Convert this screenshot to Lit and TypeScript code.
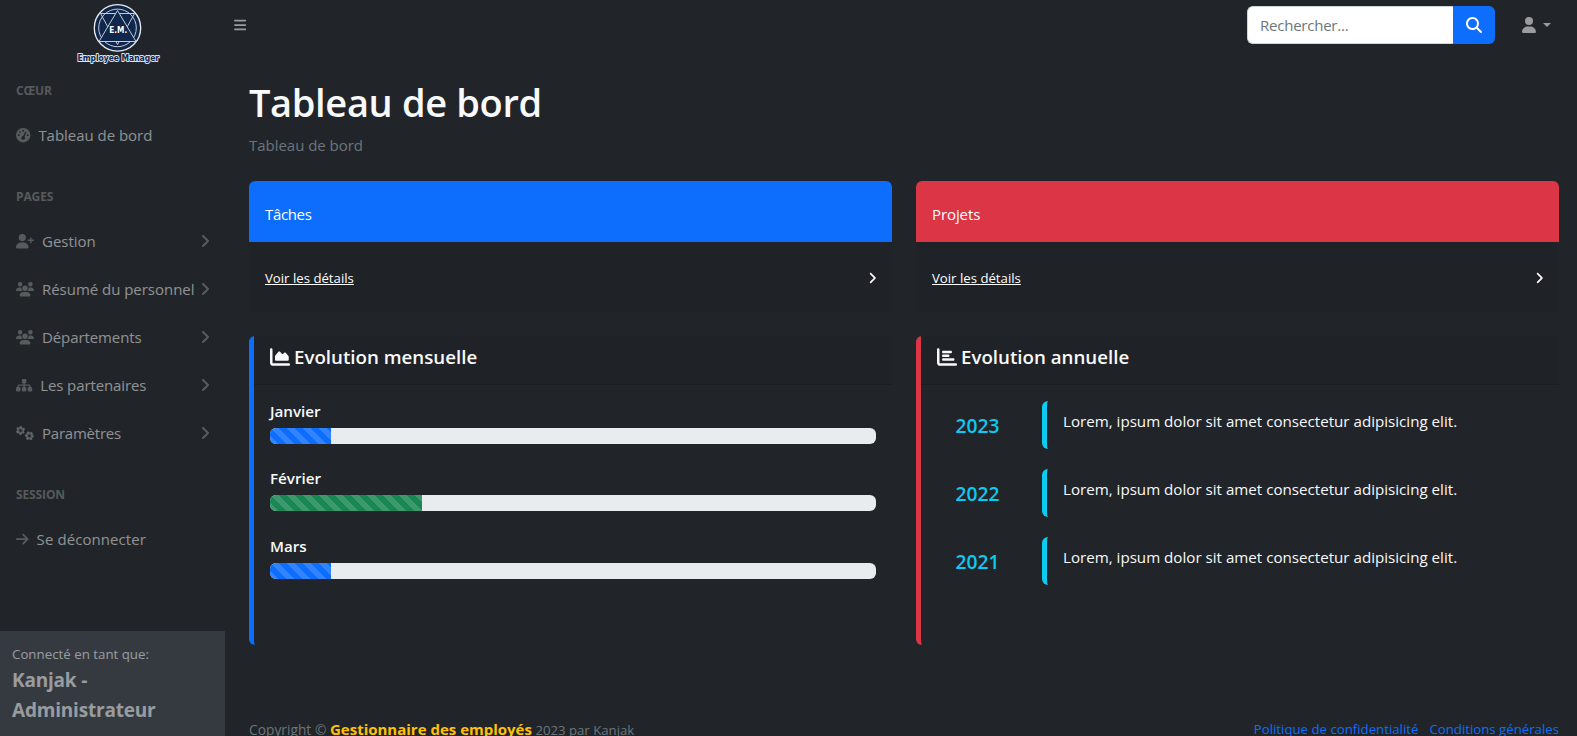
import { LitElement, html, svg, css } from "lit";
import { customElement, property } from "lit/decorators.js";
import { classMap } from "lit/directives/class-map.js";

const AXIS =
  "M64 64c0-17.7-14.3-32-32-32S0 46.3 0 64V400c0 44.2 35.8 80 80 80H480c17.7 0 32-14.3 32-32s-14.3-32-32-32H80c-8.8 0-16-7.2-16-16V64z";

const ICONS: Record<string, [number, string]> = {
  gauge: [512, "M0 256a256 256 0 1 1 512 0A256 256 0 1 1 0 256zM288 96a32 32 0 1 0 -64 0 32 32 0 1 0 64 0zM256 416c35.3 0 64-28.7 64-64c0-17.4-6.9-33.1-18.1-44.6L366 161.7c5.3-12.1-.2-26.3-12.3-31.6s-26.3 .2-31.6 12.3L257.9 288c-.6 0-1.3 0-1.9 0c-35.3 0-64 28.7-64 64s28.7 64 64 64zM176 144a32 32 0 1 0 -64 0 32 32 0 1 0 64 0zM96 288a32 32 0 1 0 0-64 32 32 0 1 0 0 64zm352-32a32 32 0 1 0 -64 0 32 32 0 1 0 64 0z"],
  userPlus: [640, "M96 128a128 128 0 1 1 256 0A128 128 0 1 1 96 128zM0 482.3C0 383.8 79.8 304 178.3 304h91.4C368.2 304 448 383.8 448 482.3c0 16.4-13.3 29.7-29.7 29.7H29.7C13.3 512 0 498.7 0 482.3zM504 312V248H440c-13.3 0-24-10.7-24-24s10.7-24 24-24h64V136c0-13.3 10.7-24 24-24s24 10.7 24 24v64h64c13.3 0 24 10.7 24 24s-10.7 24-24 24H552v64c0 13.3-10.7 24-24 24s-24-10.7-24-24z"],
  users: [640, "M144 0a80 80 0 1 1 0 160A80 80 0 1 1 144 0zM512 0a80 80 0 1 1 0 160A80 80 0 1 1 512 0zM0 298.7C0 239.8 47.8 192 106.7 192h42.7c15.9 0 31 3.5 44.6 9.7c-1.3 7.2-1.9 14.7-1.9 22.3c0 38.2 16.8 72.5 43.3 96c-.2 0-.4 0-.7 0H21.3C9.6 320 0 310.4 0 298.7zM405.3 320c-.2 0-.4 0-.7 0c26.6-23.5 43.3-57.8 43.3-96c0-7.6-.7-15-1.9-22.3c13.6-6.3 28.7-9.7 44.6-9.7h42.7C592.2 192 640 239.8 640 298.7c0 11.8-9.6 21.3-21.3 21.3H405.3zM224 224a96 96 0 1 1 192 0 96 96 0 1 1 -192 0zM128 485.3C128 411.7 187.7 352 261.3 352H378.7C452.3 352 512 411.7 512 485.3c0 14.7-11.9 26.7-26.7 26.7H154.7c-14.7 0-26.7-11.9-26.7-26.7z"],
  sitemap: [576, "M208 80c0-26.5 21.5-48 48-48h64c26.5 0 48 21.5 48 48v64c0 26.5-21.5 48-48 48h-8v40H464c30.9 0 56 25.1 56 56v32h8c26.5 0 48 21.5 48 48v64c0 26.5-21.5 48-48 48H464c-26.5 0-48-21.5-48-48V368c0-26.5 21.5-48 48-48h8V288c0-4.4-3.6-8-8-8H312v40h8c26.5 0 48 21.5 48 48v64c0 26.5-21.5 48-48 48H256c-26.5 0-48-21.5-48-48V368c0-26.5 21.5-48 48-48h8V280H112c-4.4 0-8 3.6-8 8v32h8c26.5 0 48 21.5 48 48v64c0 26.5-21.5 48-48 48H48c-26.5 0-48-21.5-48-48V368c0-26.5 21.5-48 48-48h8V288c0-30.9 25.1-56 56-56H264V192h-8c-26.5 0-48-21.5-48-48V80z"],
  arrow: [448, "M438.6 278.6c12.5-12.5 12.5-32.8 0-45.3l-160-160c-12.5-12.5-32.8-12.5-45.3 0s-12.5 32.8 0 45.3L338.8 224 32 224c-17.7 0-32 14.3-32 32s14.3 32 32 32l306.7 0L233.4 393.4c-12.5 12.5-12.5 32.8 0 45.3s32.8 12.5 45.3 0l160-160z"],
  chevron: [320, "M278.6 233.4c12.5 12.5 12.5 32.8 0 45.3l-160 160c-12.5 12.5-32.8 12.5-45.3 0s-12.5-32.8 0-45.3L210.7 256 73.4 118.6c-12.5-12.5-12.5-32.8 0-45.3s32.8-12.5 45.3 0l160 160z"],
  search: [512, "M416 208c0 45.9-14.9 88.3-40 122.7L502.6 457.4c12.5 12.5 12.5 32.8 0 45.3s-32.8 12.5-45.3 0L330.7 376C296.3 401.2 253.9 416 208 416C93.1 416 0 322.9 0 208S93.1 0 208 0S416 93.1 416 208zM208 352a144 144 0 1 0 0-288 144 144 0 1 0 0 288z"],
  user: [448, "M224 256A128 128 0 1 0 224 0a128 128 0 1 0 0 256zm-45.7 48C79.8 304 0 383.8 0 482.3C0 498.7 13.3 512 29.7 512H418.3c16.4 0 29.7-13.3 29.7-29.7C448 383.8 368.2 304 269.7 304H178.3z"],
  bars: [448, "M0 96c0-17.7 14.3-32 32-32h384c17.7 0 32 14.3 32 32s-14.3 32-32 32H32C14.3 128 0 113.7 0 96zm0 160c0-17.7 14.3-32 32-32h384c17.7 0 32 14.3 32 32s-14.3 32-32 32H32c-17.7 0-32-14.3-32-32zm0 160c0-17.7 14.3-32 32-32h384c17.7 0 32 14.3 32 32s-14.3 32-32 32H32c-17.7 0-32-14.3-32-32z"],
  chartArea: [512, AXIS + "M160 352H448c17.7 0 32-14.3 32-32V251.8c0-7.6-2.7-15-7.7-20.8l-65.8-76.8c-12.1-14.2-33.7-15-46.9-1.8l-21 21c-10 10-26.4 9.2-35.4-1.6l-39.2-47c-12.6-15.1-35.7-15.4-48.7-.6L135.9 215c-5.1 5.8-7.9 13.3-7.9 21.1v84c0 17.7 14.3 32 32 32z"],
  chartBar: [512, AXIS + "M128 128c0-17.7 14.3-32 32-32H352c17.7 0 32 14.3 32 32s-14.3 32-32 32H160c-17.7 0-32-14.3-32-32zm32 64H288c17.7 0 32 14.3 32 32s-14.3 32-32 32H160c-17.7 0-32-14.3-32-32s14.3-32 32-32zm0 96H416c17.7 0 32 14.3 32 32s-14.3 32-32 32H160c-17.7 0-32-14.3-32-32s14.3-32 32-32z"],
};

const gear = (cx: number, cy: number, turn: number) => svg`
  <g transform="translate(${cx} ${cy}) rotate(${turn})" fill="none" stroke="currentColor">
    <circle r="88" stroke-width="80"></circle>
    <circle r="138" stroke-width="48" stroke-dasharray="76 68.5" stroke-dashoffset="38"></circle>
  </g>`;

const icon = (name: string, size: number) => {
  const [w, d] = name === "gears" ? [640, ""] : ICONS[name];
  return html`<svg class="icon" width=${(w / 512) * size} height=${size}
    viewBox="0 0 ${w} 512" fill="currentColor" aria-hidden="true">
    ${name === "gears"
      ? svg`${gear(160, 160, 30)}${gear(478, 352, 0)}`
      : svg`<path d=${d}></path>`}
  </svg>`;
};

const shared = css`
  * { box-sizing: border-box; }
  .icon { display: block; flex: none; overflow: visible; }
  a { color: inherit; text-decoration: none; }
`;

@customElement("brand-logo")
class BrandLogo extends LitElement {
  static styles = css`
    :host { display: block; width: 86px; height: 62px; }
    svg { display: block; }
    .line { fill: none; stroke: #c3ccd9; stroke-width: 1; }
    .ring { fill: #10264a; stroke: #e8edf3; stroke-width: 1.3; }
    .front { fill: #10264a; stroke: #c3ccd9; stroke-width: 1; }
    .mark { font: 700 8.5px "DejaVu Sans", sans-serif; fill: #fff; }
    .name {
      font: 700 8.5px "DejaVu Sans", sans-serif;
      fill: #10264a; stroke: #dfe6ef; stroke-width: 1.9;
      stroke-linejoin: round; paint-order: stroke;
    }
  `;
  render() {
    return html`<svg width="86" height="62" viewBox="0 0 86 62">
      <circle class="ring" cx="42.5" cy="24.9" r="23.2"></circle>
      <circle class="line" cx="42.5" cy="24.9" r="18.8"></circle>
      <path class="line" d="M25.5 10.5H59.5L42.5 41.5Z"></path>
      <path class="front" d="M42.5 7.5L24 38.5H61Z"></path>
      <text class="mark" x="34.2" y="29.8" textLength="18" lengthAdjust="spacingAndGlyphs">E.M.</text>
      <text class="name" x="2.5" y="58" textLength="81.5" lengthAdjust="spacingAndGlyphs">Employee Manager</text>
    </svg>`;
  }
}

interface NavLink { label: string; icon: string; more?: boolean; spacing?: string; }
interface NavGroup { title: string; links: NavLink[]; }

const NAV: NavGroup[] = [
  { title: "CŒUR", links: [{ label: "Tableau de bord", icon: "gauge" }] },
  {
    title: "PAGES",
    links: [
      { label: "Gestion", icon: "userPlus", more: true },
      { label: "Résumé du personnel", icon: "users", more: true },
      { label: "Départements", icon: "users", more: true, spacing: "tight" },
      { label: "Les partenaires", icon: "sitemap", more: true, spacing: "tight" },
      { label: "Paramètres", icon: "gears", more: true, spacing: "tighter" },
    ],
  },
  { title: "SESSION", links: [{ label: "Se déconnecter", icon: "arrow", spacing: "loose" }] },
];

@customElement("side-nav")
class SideNav extends LitElement {
  static styles = [shared, css`
    :host { display: flex; flex-direction: column; width: 225px; height: 100%; color: rgba(255,255,255,.5); }
    .brand { display: flex; justify-content: center; height: 53px; padding-top: 3px; margin-left: 11px; }
    nav { flex: 1; }
    .heading { padding: 29px 16px 11px; font-size: 12px; line-height: 18px; font-weight: 700; color: rgba(255,255,255,.25); letter-spacing: -.12px; }
    .link { display: flex; align-items: center; height: 48px; padding: 0 15px 0 16px; font-size: 15px; line-height: 24px; letter-spacing: -.03px; white-space: nowrap; }
    .link .icon { color: rgba(255,255,255,.25); }
    .label { margin-left: 8px; flex: 1; }
    .tight { letter-spacing: -.1px; }
    .tighter { letter-spacing: -.22px; }
    .loose { letter-spacing: .08px; }
    .foot { padding: 13px 12px 11px; background: #343a40; }
    .as { font-size: 13.3px; line-height: 21px; }
    .who { font-size: 19px; line-height: 30px; font-weight: 700; letter-spacing: -.2px; }
  `];
  render() {
    return html`
      <div class="brand"><brand-logo></brand-logo></div>
      <nav>
        ${NAV.map((g) => html`
          <div class="heading">${g.title}</div>
          ${g.links.map((l) => html`
            <a class="link">${icon(l.icon, 14.4)}
              <span class=${classMap({ label: true, [l.spacing ?? "plain"]: true })}>${l.label}</span>
              ${l.more ? icon("chevron", 16) : ""}
            </a>`)}`)}
      </nav>
      <div class="foot">
        <div class="as">Connecté en tant que:</div>
        <div class="who">Kanjak - Administrateur</div>
      </div>`;
  }
}

@customElement("top-bar")
class TopBar extends LitElement {
  static styles = [shared, css`
    :host { display: flex; align-items: center; height: 50px; padding: 0 26px 0 9px; color: rgba(255,255,255,.55); }
    .search { display: flex; margin-left: auto; width: 248px; height: 38px; }
    .field { flex: 1; min-width: 0; border: 1px solid #ced4da; border-right: 0; border-radius: 6px 0 0 6px; background: #fff; padding: 0 12px; font: 15px "Open Sans", sans-serif; letter-spacing: -.23px; color: #212529; }
    .field::placeholder { color: #6c757d; opacity: 1; }
    .go { display: grid; place-items: center; width: 42px; border: 0; padding: 0; border-radius: 0 6px 6px 0; background: #0d6efd; color: #fff; }
    .account { display: flex; align-items: center; gap: 7px; margin-left: 27px; }
    .caret { border: 4.5px solid transparent; border-top-color: currentColor; border-bottom: 0; }
  `];
  render() {
    return html`
      ${icon("bars", 14)}
      <div class="search">
        <input class="field" placeholder="Rechercher..." />
        <button class="go">${icon("search", 16)}</button>
      </div>
      <div class="account">${icon("user", 16)}<span class="caret"></span></div>`;
  }
}

@customElement("link-card")
class LinkCard extends LitElement {
  @property() heading = "";
  @property() tone = "blue";
  static styles = [shared, css`
    :host { display: block; height: 131px; border-radius: 6px; overflow: hidden; background: #1f2327; color: #fff; }
    .top { height: 61px; padding: 21px 16px 0; font-size: 15px; line-height: 24px; }
    .blue { background: #0d6efd; letter-spacing: -.35px; }
    .red { background: #dc3545; letter-spacing: -.1px; }
    .bottom { display: flex; align-items: center; justify-content: space-between; height: 70px; padding: 2px 15px 0 16px; }
    .more { font-size: 13.2px; line-height: 21px; text-decoration: underline; }
  `];
  render() {
    return html`
      <div class=${classMap({ top: true, [this.tone]: true })}>${this.heading}</div>
      <div class="bottom"><a class="more">Voir les détails</a>${icon("chevron", 14)}</div>`;
  }
}

@customElement("panel-card")
class PanelCard extends LitElement {
  @property() heading = "";
  @property() glyph = "chartArea";
  @property() tone = "blue";
  static styles = [shared, css`
    :host { display: block; }
    .panel { height: 309px; border-left: 5px solid; border-radius: 6px; color: #f8f9fa; }
    .blue { border-left-color: #0d6efd; }
    .red { border-left-color: #dc3545; }
    .head { display: flex; gap: 4px; height: 49px; padding: 8px 16px 0; border-bottom: 1px solid #1b1e21; border-top-right-radius: 6px; background: #1f2327; }
    .head .icon { margin-top: 3px; }
    .title { margin: 0; font-size: 18.72px; font-weight: 600; line-height: 26px; }
  `];
  render() {
    return html`<section class=${classMap({ panel: true, [this.tone]: true })}>
      <header class="head">${icon(this.glyph, 20)}<h2 class="title">${this.heading}</h2></header>
      <slot></slot>
    </section>`;
  }
}

const MONTHS = [
  { name: "Janvier", value: 10, tone: "blue" },
  { name: "Février", value: 25, tone: "green" },
  { name: "Mars", value: 10, tone: "blue" },
];
const YEARS = ["2023", "2022", "2021"];

@customElement("app-root")
class AppRoot extends LitElement {
  static styles = [shared, css`
    :host {
      display: grid; grid-template-columns: 225px minmax(0, 1fr); height: 100vh; overflow: hidden;
      background: #212529; color: #f8f9fa; font-family: "Open Sans", "Noto Sans", sans-serif; font-size: 15px;
    }
    .page { height: 100vh; overflow: hidden; }
    main { padding: 28px 18px 0 24px; }
    h1 { margin: 0 0 7px; font-size: 38px; line-height: 48px; font-weight: 600; letter-spacing: -.35px; color: #f8f9fa; }
    .crumb { line-height: 24px; color: #6c757d; margin-bottom: 24px; letter-spacing: -.03px; }
    .cards { display: grid; grid-template-columns: 1fr 1fr; gap: 24px; }
    .months { display: grid; gap: 22.9px; padding: 14px 16px 0; }
    .month { font-size: 15.2px; font-weight: 600; line-height: 24px; height: 28.6px; }
    .track { height: 16px; border-radius: 6px; overflow: hidden; background: #e9ecef; }
    .fill {
      height: 100%; background-size: 16px 16px;
      background-image: linear-gradient(45deg, rgba(255,255,255,.15) 25%, transparent 25%, transparent 50%, rgba(255,255,255,.15) 50%, rgba(255,255,255,.15) 75%, transparent 75%, transparent);
    }
    .blue { background-color: #0d6efd; }
    .green { background-color: #198754; }
    .years { display: grid; gap: 20px; padding: 16px 16px 0 4px; }
    .year { display: grid; grid-template-columns: 105px 1fr; column-gap: 12px; height: 48px; }
    .num { font-size: 19.2px; font-weight: 600; line-height: 24px; padding-top: 13px; text-align: center; color: #0dcaf0; }
    .note { border-left: 5px solid #0dcaf0; border-radius: 6px; padding: 8px 0 0 16px; font-size: 15.15px; line-height: 24px; }
    footer { display: flex; justify-content: space-between; margin-top: 72px; font-size: 13.2px; line-height: 24px; color: #6c757d; white-space: pre; }
    .copy { font-size: 13.7px; letter-spacing: .05px; }
    .app { font-size: 15px; font-weight: 700; color: #ffc107; }
    .legal { display: flex; gap: 11px; color: #0d6efd; font-size: 13.23px; }
  `];
  render() {
    return html`
      <side-nav></side-nav>
      <div class="page">
        <top-bar></top-bar>
        <main>
          <h1>Tableau de bord</h1>
          <div class="crumb">Tableau de bord</div>
          <div class="cards">
            <link-card heading="Tâches" tone="blue"></link-card>
            <link-card heading="Projets" tone="red"></link-card>
            <panel-card heading="Evolution mensuelle" glyph="chartArea" tone="blue">
              <div class="months">
                ${MONTHS.map((m) => html`<div>
                  <div class="month">${m.name}</div>
                  <div class="track"><div class=${classMap({ fill: true, [m.tone]: true })} style="width:${m.value}%"></div></div>
                </div>`)}
              </div>
            </panel-card>
            <panel-card heading="Evolution annuelle" glyph="chartBar" tone="red">
              <div class="years">
                ${YEARS.map((y) => html`<div class="year">
                  <div class="num">${y}</div>
                  <div class="note">Lorem, ipsum dolor sit amet consectetur adipisicing elit.</div>
                </div>`)}
              </div>
            </panel-card>
          </div>
          <footer>
            <div><span class="copy">Copyright © </span><span class="app">Gestionnaire des employés</span><span> 2023 par Kanjak</span></div>
            <div class="legal"><a>Politique de confidentialité</a><a>Conditions générales</a></div>
          </footer>
        </main>
      </div>`;
  }
}
